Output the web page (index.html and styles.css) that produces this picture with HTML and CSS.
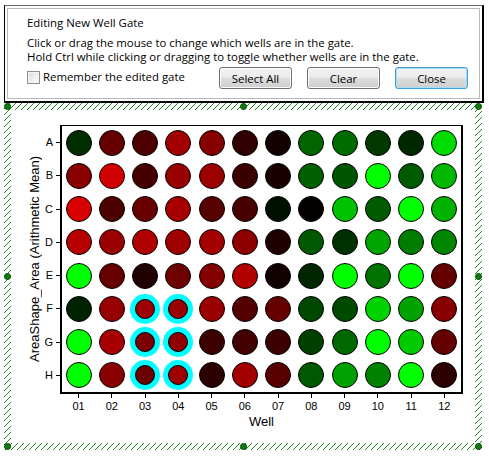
FILE: index.html
```html
<!DOCTYPE html>
<html>
<head>
<meta charset="utf-8">
<link rel="stylesheet" href="styles.css">
</head>
<body>
<div class="panel">
  <div class="panel-in">
    <div class="title">Editing New Well Gate</div>
    <div class="desc">Click or drag the mouse to change which wells are in the gate.<br>Hold Ctrl while clicking or dragging to toggle whether wells are in the gate.</div>
    <div class="actions">
      <label class="remember"><span class="check"></span>Remember the edited gate</label>
      <div class="buttons">
        <button class="btn">Select All</button>
        <button class="btn">Clear</button>
        <button class="btn default">Close</button>
      </div>
    </div>
  </div>
</div>
<div class="frame">
  <span class="handle tl"></span><span class="handle tc"></span><span class="handle tr"></span>
  <span class="handle ml"></span><span class="handle mr"></span>
  <span class="handle bl"></span><span class="handle bc"></span><span class="handle br"></span>
  <div class="canvas">
    <div class="chart">
      <div class="ytitle"><span>AreaShape_Area (Arithmetic Mean)</span></div>
      <div class="ylabels">
        <div class="yl"><span>A</span><i class="ytick"></i></div>
        <div class="yl"><span>B</span><i class="ytick"></i></div>
        <div class="yl"><span>C</span><i class="ytick"></i></div>
        <div class="yl"><span>D</span><i class="ytick"></i></div>
        <div class="yl"><span>E</span><i class="ytick"></i></div>
        <div class="yl"><span>F</span><i class="ytick"></i></div>
        <div class="yl"><span>G</span><i class="ytick"></i></div>
        <div class="yl"><span>H</span><i class="ytick"></i></div>
      </div>
      <div class="plate">
        <!-- A -->
        <div class="cell"><div class="well" style="background:#002e00"></div></div>
        <div class="cell"><div class="well" style="background:#650000"></div></div>
        <div class="cell"><div class="well" style="background:#4e0000"></div></div>
        <div class="cell"><div class="well" style="background:#a20000"></div></div>
        <div class="cell"><div class="well" style="background:#860000"></div></div>
        <div class="cell"><div class="well" style="background:#300000"></div></div>
        <div class="cell"><div class="well" style="background:#140000"></div></div>
        <div class="cell"><div class="well" style="background:#006400"></div></div>
        <div class="cell"><div class="well" style="background:#006c00"></div></div>
        <div class="cell"><div class="well" style="background:#003800"></div></div>
        <div class="cell"><div class="well" style="background:#002800"></div></div>
        <div class="cell"><div class="well" style="background:#00dc00"></div></div>
        <!-- B -->
        <div class="cell"><div class="well" style="background:#880000"></div></div>
        <div class="cell"><div class="well" style="background:#d20000"></div></div>
        <div class="cell"><div class="well" style="background:#440000"></div></div>
        <div class="cell"><div class="well" style="background:#990000"></div></div>
        <div class="cell"><div class="well" style="background:#9e0000"></div></div>
        <div class="cell"><div class="well" style="background:#380000"></div></div>
        <div class="cell"><div class="well" style="background:#1a0000"></div></div>
        <div class="cell"><div class="well" style="background:#006000"></div></div>
        <div class="cell"><div class="well" style="background:#005600"></div></div>
        <div class="cell"><div class="well" style="background:#00ff00"></div></div>
        <div class="cell"><div class="well" style="background:#005a00"></div></div>
        <div class="cell"><div class="well" style="background:#00b800"></div></div>
        <!-- C -->
        <div class="cell"><div class="well" style="background:#d80000"></div></div>
        <div class="cell"><div class="well" style="background:#4c0000"></div></div>
        <div class="cell"><div class="well" style="background:#680000"></div></div>
        <div class="cell"><div class="well" style="background:#a80000"></div></div>
        <div class="cell"><div class="well" style="background:#560000"></div></div>
        <div class="cell"><div class="well" style="background:#480000"></div></div>
        <div class="cell"><div class="well" style="background:#001000"></div></div>
        <div class="cell"><div class="well" style="background:#040000"></div></div>
        <div class="cell"><div class="well" style="background:#00c200"></div></div>
        <div class="cell"><div class="well" style="background:#005a00"></div></div>
        <div class="cell"><div class="well" style="background:#00ff00"></div></div>
        <div class="cell"><div class="well" style="background:#00b200"></div></div>
        <!-- D -->
        <div class="cell"><div class="well" style="background:#b80000"></div></div>
        <div class="cell"><div class="well" style="background:#9a0000"></div></div>
        <div class="cell"><div class="well" style="background:#b00000"></div></div>
        <div class="cell"><div class="well" style="background:#a00000"></div></div>
        <div class="cell"><div class="well" style="background:#a40000"></div></div>
        <div class="cell"><div class="well" style="background:#8e0000"></div></div>
        <div class="cell"><div class="well" style="background:#1e0000"></div></div>
        <div class="cell"><div class="well" style="background:#005800"></div></div>
        <div class="cell"><div class="well" style="background:#003000"></div></div>
        <div class="cell"><div class="well" style="background:#00a400"></div></div>
        <div class="cell"><div class="well" style="background:#007c00"></div></div>
        <div class="cell"><div class="well" style="background:#008600"></div></div>
        <!-- E -->
        <div class="cell"><div class="well" style="background:#00ff00"></div></div>
        <div class="cell"><div class="well" style="background:#660000"></div></div>
        <div class="cell"><div class="well" style="background:#200000"></div></div>
        <div class="cell"><div class="well" style="background:#6e0000"></div></div>
        <div class="cell"><div class="well" style="background:#840000"></div></div>
        <div class="cell"><div class="well" style="background:#b20000"></div></div>
        <div class="cell"><div class="well" style="background:#100000"></div></div>
        <div class="cell"><div class="well" style="background:#002600"></div></div>
        <div class="cell"><div class="well" style="background:#00ff00"></div></div>
        <div class="cell"><div class="well" style="background:#007200"></div></div>
        <div class="cell"><div class="well" style="background:#00ff00"></div></div>
        <div class="cell"><div class="well" style="background:#650000"></div></div>
        <!-- F -->
        <div class="cell"><div class="well" style="background:#002200"></div></div>
        <div class="cell"><div class="well" style="background:#980000"></div></div>
        <div class="cell"><div class="well sel" style="background:#9c0000"></div></div>
        <div class="cell"><div class="well sel" style="background:#9a0000"></div></div>
        <div class="cell"><div class="well" style="background:#9a0000"></div></div>
        <div class="cell"><div class="well" style="background:#550000"></div></div>
        <div class="cell"><div class="well" style="background:#640000"></div></div>
        <div class="cell"><div class="well" style="background:#004800"></div></div>
        <div class="cell"><div class="well" style="background:#004a00"></div></div>
        <div class="cell"><div class="well" style="background:#00d200"></div></div>
        <div class="cell"><div class="well" style="background:#00a200"></div></div>
        <div class="cell"><div class="well" style="background:#880000"></div></div>
        <!-- G -->
        <div class="cell"><div class="well" style="background:#00ff00"></div></div>
        <div class="cell"><div class="well" style="background:#a80000"></div></div>
        <div class="cell"><div class="well sel" style="background:#7c0000"></div></div>
        <div class="cell"><div class="well sel" style="background:#900000"></div></div>
        <div class="cell"><div class="well" style="background:#3c0000"></div></div>
        <div class="cell"><div class="well" style="background:#420000"></div></div>
        <div class="cell"><div class="well" style="background:#3c0000"></div></div>
        <div class="cell"><div class="well" style="background:#004000"></div></div>
        <div class="cell"><div class="well" style="background:#006800"></div></div>
        <div class="cell"><div class="well" style="background:#00ff00"></div></div>
        <div class="cell"><div class="well" style="background:#00ca00"></div></div>
        <div class="cell"><div class="well" style="background:#640000"></div></div>
        <!-- H -->
        <div class="cell"><div class="well" style="background:#00ff00"></div></div>
        <div class="cell"><div class="well" style="background:#880000"></div></div>
        <div class="cell"><div class="well sel" style="background:#6a0000"></div></div>
        <div class="cell"><div class="well sel" style="background:#9c0000"></div></div>
        <div class="cell"><div class="well" style="background:#2a0000"></div></div>
        <div class="cell"><div class="well" style="background:#a20000"></div></div>
        <div class="cell"><div class="well" style="background:#580000"></div></div>
        <div class="cell"><div class="well" style="background:#005800"></div></div>
        <div class="cell"><div class="well" style="background:#00a000"></div></div>
        <div class="cell"><div class="well" style="background:#008200"></div></div>
        <div class="cell"><div class="well" style="background:#00ff00"></div></div>
        <div class="cell"><div class="well" style="background:#2c0000"></div></div>
      </div>
      <div class="xlabels">
        <div class="xl"><i class="xtick"></i><span>01</span></div>
        <div class="xl"><i class="xtick"></i><span>02</span></div>
        <div class="xl"><i class="xtick"></i><span>03</span></div>
        <div class="xl"><i class="xtick"></i><span>04</span></div>
        <div class="xl"><i class="xtick"></i><span>05</span></div>
        <div class="xl"><i class="xtick"></i><span>06</span></div>
        <div class="xl"><i class="xtick"></i><span>07</span></div>
        <div class="xl"><i class="xtick"></i><span>08</span></div>
        <div class="xl"><i class="xtick"></i><span>09</span></div>
        <div class="xl"><i class="xtick"></i><span>10</span></div>
        <div class="xl"><i class="xtick"></i><span>11</span></div>
        <div class="xl"><i class="xtick"></i><span>12</span></div>
      </div>
      <div class="xtitle">Well</div>
    </div>
  </div>
</div>
</body>
</html>
```
FILE: styles.css
```css
html, body {
  margin: 0;
  padding: 0;
  background: #ffffff;
}
body {
  width: 489px;
  height: 456px;
  overflow: hidden;
  font-family: "Open Sans", "Noto Sans", sans-serif;
  color: #000;
}

/* ---------- top panel ---------- */
.panel {
  margin: 5px 5px 0 4px;
  border-top: 1px solid #6a6a6a;
  border-left: 1px solid #000;
  border-right: 2px solid #000;
  border-bottom: 2px solid #000;
  background: #fff;
}
.panel-in {
  margin: 2px;
  border: 1px solid #b9b9b9;
  padding: 6px 11px 9px 19px;
  font-size: 11.4px;
}
.title {
  line-height: 16px;
  height: 16px;
}
.desc {
  margin-top: 5px;
  line-height: 14px;
}
.actions {
  margin-top: 3px;
  height: 22px;
  display: flex;
  align-items: center;
  justify-content: space-between;
}
.remember {
  display: flex;
  align-items: center;
  gap: 3px;
  margin-top: -2px;
  line-height: 14px;
}
.check {
  width: 13px;
  height: 13px;
  box-sizing: border-box;
  border: 1px solid #8e8f8f;
  background: linear-gradient(135deg, #dcdcdc, #fefefe);
  box-shadow: inset 0 0 0 1px #f4f4f4;
}
.buttons {
  display: flex;
  gap: 15px;
}
.btn {
  width: 73px;
  height: 22px;
  box-sizing: border-box;
  padding: 0;
  font: inherit;
  color: #000;
  border: 1px solid #707070;
  border-radius: 3px;
  background: linear-gradient(#f2f2f2 0%, #ebebeb 50%, #dddddd 50%, #cfcfcf 100%);
  box-shadow: inset 0 0 0 1px #fbfbfb;
  line-height: 19px;
}
.btn.default {
  border-color: #3c9fd8;
  box-shadow: inset 0 0 0 1px #a9dcf6;
}

/* ---------- selection frame ---------- */
.frame {
  position: relative;
  margin: 0 0 0 4px;
  width: 478px;
  height: 347px;
  box-sizing: border-box;
  padding: 7px;
  background-color: #fff;
  background-image: linear-gradient(to bottom right,
    transparent calc(50% - 0.6px),
    #1f8a1f calc(50% - 0.6px),
    #1f8a1f calc(50% + 0.6px),
    transparent calc(50% + 0.6px));
  background-size: 6px 6px;
}
.handle {
  position: absolute;
  width: 7px;
  height: 7px;
  box-sizing: border-box;
  border-radius: 50%;
  background: #0c7c0c;
  border: 1px solid #034a03;
  z-index: 2;
}
.tl { left: 0; top: 0; }
.tc { left: calc(50% - 3.5px); top: 0; }
.tr { right: 0; top: 0; }
.ml { left: 0; top: calc(50% - 3.5px); }
.mr { right: 0; top: calc(50% - 3.5px); }
.bl { left: 0; bottom: 0; }
.bc { left: calc(50% - 3.5px); bottom: 0; }
.br { right: 0; bottom: 0; }

.canvas {
  background: #fff;
  height: 100%;
  padding-top: 15px;
  box-sizing: border-box;
  font-family: "Liberation Sans", Arial, sans-serif;
}
.chart {
  display: grid;
  grid-template-columns: 31px 18px 403px;
  grid-template-rows: 269px auto auto;
}
.ytitle {
  grid-column: 1;
  grid-row: 1;
  display: flex;
  justify-content: flex-end;
  align-items: center;
}
.ytitle span {
  writing-mode: vertical-rl;
  transform: rotate(180deg);
  font-size: 13px;
  line-height: 15px;
  white-space: nowrap;
  margin-top: -1px;
}
.ylabels {
  grid-column: 2;
  grid-row: 1;
  padding-top: 1px;
  display: grid;
  grid-template-rows: repeat(8, 33.25px);
  align-content: start;
}
.yl {
  display: flex;
  align-items: center;
  justify-content: flex-end;
  font-size: 11px;
  line-height: 13px;
}
.ytick {
  width: 4px;
  height: 1px;
  background: #000;
  margin-left: 3px;
}
.plate {
  grid-column: 3;
  grid-row: 1;
  box-sizing: border-box;
  border-top: 1px solid #000;
  border-left: 2px solid #000;
  border-right: 2px solid #000;
  border-bottom: 2px solid #000;
  display: grid;
  grid-template-columns: repeat(12, 33.25px);
  grid-template-rows: repeat(8, 33.25px);
}
.cell {
  display: flex;
  align-items: center;
  justify-content: center;
}
.well {
  width: 26px;
  height: 26px;
  box-sizing: border-box;
  border: 1px solid #000;
  border-radius: 50%;
}
.well.sel {
  width: 20px;
  height: 20px;
  box-shadow: 0 0 0 5px #00ffff;
}
.xlabels {
  grid-column: 3;
  grid-row: 2;
  padding-left: 2px;
  display: grid;
  grid-template-columns: repeat(12, 33.25px);
}
.xl {
  display: flex;
  flex-direction: column;
  align-items: center;
  font-size: 11px;
  line-height: 13px;
}
.xtick {
  width: 1px;
  height: 4px;
  background: #000;
  margin-bottom: 2px;
}
.xtitle {
  grid-column: 3;
  grid-row: 3;
  text-align: center;
  font-size: 13px;
  line-height: 15px;
  margin-top: 1px;
}
```
